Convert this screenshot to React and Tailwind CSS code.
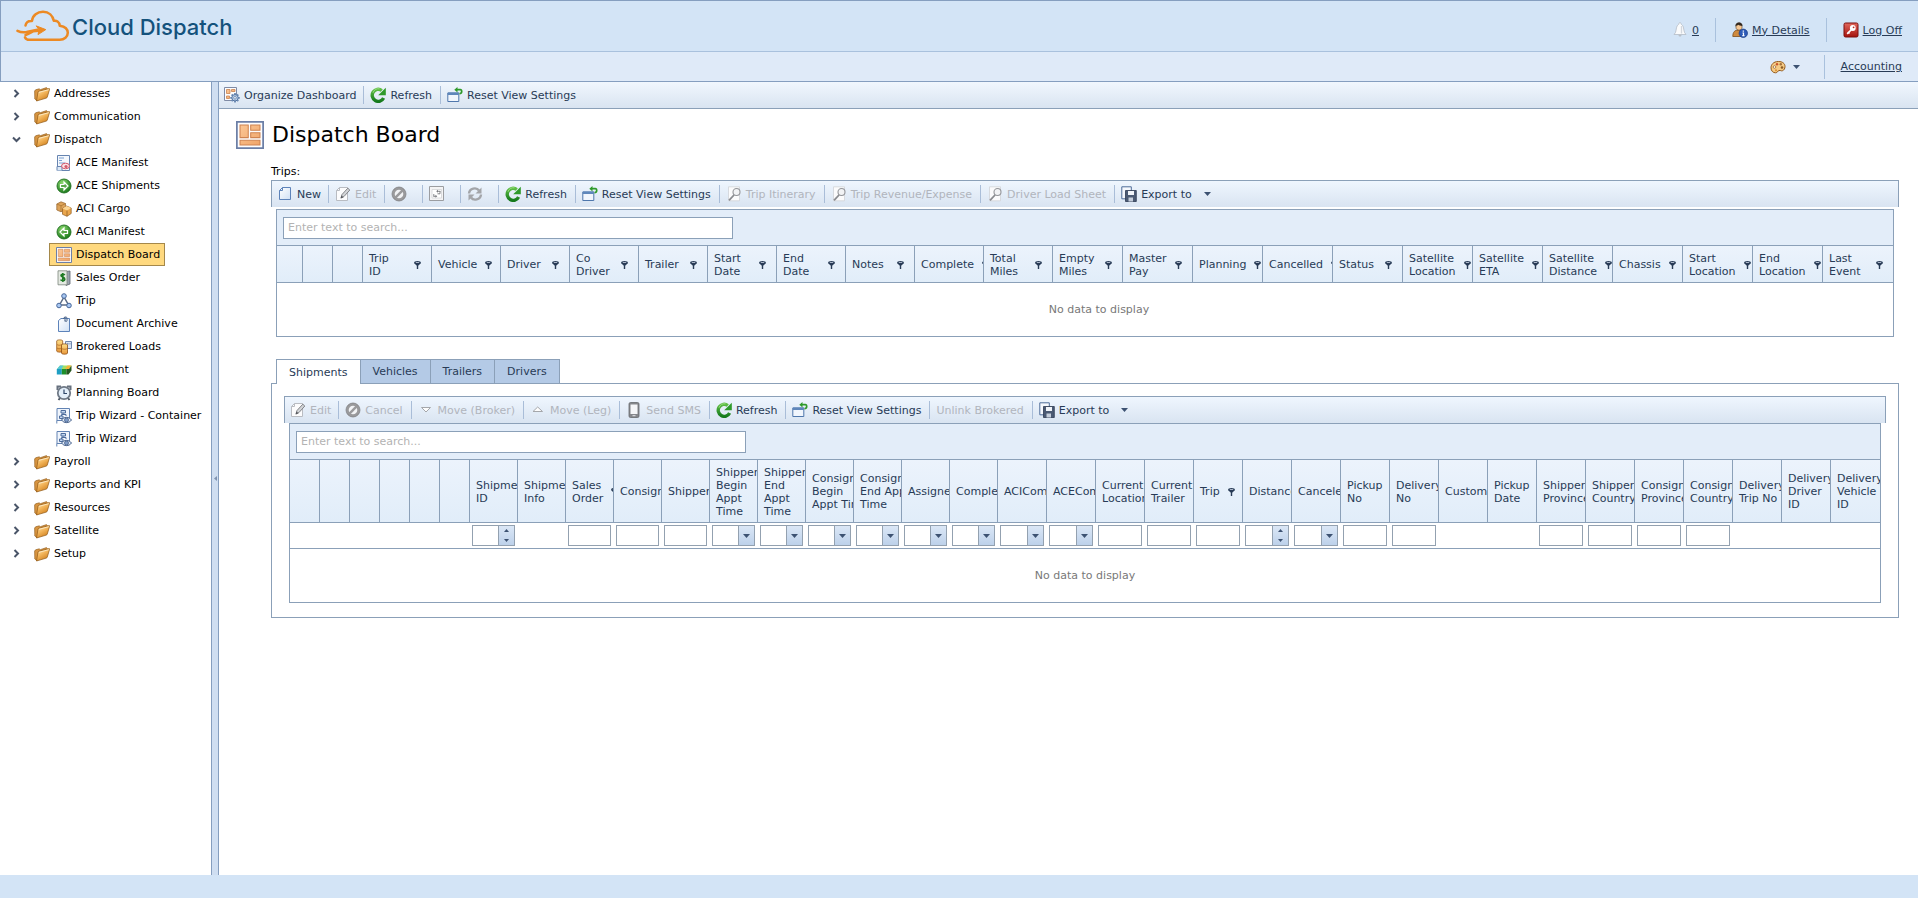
import React, { useState } from "react";

const GREEN = "#2f9a2b";

// Shared gradients for the toolbar and tree icons
const IconDefs = () => (
  <svg width="0" height="0" className="absolute" aria-hidden="true">
    <defs>
      <linearGradient id="folder" x1="0" y1="0" x2="0.6" y2="1">
        <stop offset="0" stopColor="#ffe9b8" />
        <stop offset="0.5" stopColor="#f3b65c" />
        <stop offset="1" stopColor="#d07f1c" />
      </linearGradient>
      <radialGradient id="green" cx="0.4" cy="0.3" r="0.7">
        <stop offset="0" stopColor="#8fdc70" />
        <stop offset="1" stopColor="#1c7a1c" />
      </radialGradient>
      <linearGradient id="paper" x1="0" y1="0" x2="1" y2="1">
        <stop offset="0" stopColor="#ffffff" />
        <stop offset="1" stopColor="#cfe0f5" />
      </linearGradient>
      <linearGradient id="refresh" x1="0" y1="0" x2="0" y2="1">
        <stop offset="0" stopColor="#5fbf45" />
        <stop offset="1" stopColor="#157a1d" />
      </linearGradient>
      <linearGradient id="gold" x1="0" y1="0" x2="0" y2="1">
        <stop offset="0" stopColor="#ffe08a" />
        <stop offset="1" stopColor="#e8973a" />
      </linearGradient>
      <linearGradient id="red" x1="0" y1="0" x2="0" y2="1">
        <stop offset="0" stopColor="#e2685c" />
        <stop offset="1" stopColor="#a3120e" />
      </linearGradient>
      <linearGradient id="tile" x1="0" y1="0" x2="1" y2="1">
        <stop offset="0" stopColor="#fbc795" />
        <stop offset="1" stopColor="#f0a468" />
      </linearGradient>
    </defs>
  </svg>
);

const Svg = ({ children, size = 16 }) => (
  <svg width={size} height={size} viewBox="0 0 16 16" fill="none" className="shrink-0" aria-hidden="true">
    {children}
  </svg>
);

const icons = {
  folder: (
    <>
      <path d="M.6 5 1.600 3.800 5.200 2.800l1 .9L12.500 1.600l1 1.200L3 14.800 .8 13z" fill="#d79440" stroke="#8a5516" strokeWidth="0.600" />
      <path d="M4 6.200c.2-.6.5-.9 1-1L15 2.600c.5-.1.700.1.600.6L13.300 11c-.2.600-.5.900-1 1.100L2.500 15z" fill="url(#folder)" stroke="#8f5714" strokeWidth="0.700" />
      <path d="M5 6.300 14.800 3.700" stroke="#fff6dd" strokeWidth="0.700" />
    </>
  ),
  aceManifest: (
    <>
      <path d="M1.500.5h12v15h-12z" fill="#f4f8fd" stroke="#6684b0" />
      <path d="M3 3h5M3 5.500h3M3 8h6" stroke="#7ba0d0" />
      <path d="M1 15.500v-4h5v4" fill="#dce8f6" stroke="#6684b0" />
      <ellipse cx="9.500" cy="11" rx="4" ry="2.800" fill="#fbe3e6" stroke="#d3596b" />
      <circle cx="10" cy="11.500" r="1.600" fill="#d3596b" />
    </>
  ),
  arrowRight: (
    <>
      <circle cx="8" cy="8" r="7" fill="url(#green)" stroke="#1f6e1f" strokeWidth="0.900" />
      <path d="M4.500 6.500H8V4l4 4-4 4V9.500H4.500z" fill="#5aa84a" stroke="#fff" strokeWidth="1.200" />
    </>
  ),
  arrowLeft: (
    <>
      <circle cx="8" cy="8" r="7" fill="url(#green)" stroke="#1f6e1f" strokeWidth="0.900" />
      <path d="M11.500 6.500H8V4L4 8l4 4V9.500h3.500z" fill="#5aa84a" stroke="#fff" strokeWidth="1.200" />
    </>
  ),
  cargo: (
    <>
      <path d="M.8 3 5 .8l4.500 1.700V8.500L5 10.800.8 9z" fill="#dda35a" stroke="#94622a" strokeWidth="0.700" />
      <path d="M.8 3 5 4.800l4.500-2.300M5 4.800v6" stroke="#a8722e" strokeWidth="0.700" />
      <path d="m6.500 7.500 4-2.500 4.700 2v5.500L11 15.300l-4.500-2z" fill="#eaa64c" stroke="#8e5a20" strokeWidth="0.700" />
      <path d="m6.500 7.500 4.500 2 4.200-2.500L10.500 5z" fill="#fbd695" />
      <path d="M11 9.500v5.800" stroke="#8e5a20" strokeWidth="0.700" />
    </>
  ),
  board: (
    <>
      <path d="M.5.5h15v15H.5z" fill="#fdfdfe" stroke="#6c7fa6" />
      <path d="M2.300 2.300h4.700v7.200H2.300zM8.400 2.300h5.300v3H8.400zM8.400 6.700h5.300v2.800H8.400zM2.300 11h11.400v2.700H2.300z" fill="url(#tile)" stroke="#cf8450" strokeWidth="0.600" />
    </>
  ),
  salesOrder: (
    <>
      <path d="M10 1.500 14 1v13l-4 1.500z" fill="#9aa3ad" stroke="#5e6670" strokeWidth="0.800" />
      <path d="M2 .8h9v14H2z" fill="#e4e9e2" stroke="#7b857c" strokeWidth="0.800" />
      <path d="M8.800 5C8 3.900 5 3.800 5 5.500S8.800 7 8.800 9.200 5.500 11 4.500 9.600M6.800 3v9" stroke="#1f7a24" strokeWidth="1.600" />
    </>
  ),
  trip: (
    <>
      <path d="M8 4 3.500 12h9z" stroke="#5a6b85" strokeWidth="1.500" />
      <circle cx="8" cy="3" r="2.300" fill="#a9c8f2" stroke="#47679a" />
      <circle cx="3" cy="12.500" r="2.300" fill="#a9c8f2" stroke="#47679a" />
      <circle cx="13" cy="12.500" r="2.300" fill="#a9c8f2" stroke="#47679a" />
    </>
  ),
  archive: (
    <>
      <path d="M2.500 4.500 5 2.500h8.500v13h-11z" fill="url(#paper)" stroke="#5d83ba" />
      <path d="M9 1v4.500M7.500 3C7.500.5 11 .5 11 2v2.500c0 1.300-1.800 1.300-1.800 0" stroke="#4d6488" />
    </>
  ),
  brokered: (
    <>
      <path d="M9.500 2.500h6v7h-6z" fill="#dbe5f2" stroke="#7188ac" />
      <path d="M11 4h1.500v1.500H11zM13.500 4h1v1.500h-1z" fill="#7a94bc" />
      <path d="M.7 2c0-1.500 6-1.500 6 0v10c0 1.500-6 1.500-6 0z" fill="url(#gold)" stroke="#99591a" strokeWidth="0.800" />
      <path d="M5.500 6c0-1.500 6-1.500 6 0v8c0 1.600-6 1.600-6 0z" fill="url(#gold)" stroke="#8a4d14" strokeWidth="0.800" />
      <path d="M1 5.500c1 1 3 1 5 0M1 9c1 1 3 1 4.500 0M5.500 9.500c1.500 1 4.500 1 6 0" stroke="#a9651f" strokeWidth="0.700" />
    </>
  ),
  shipment: (
    <>
      <path d="m1 7 3-3.500h11.500L12.500 7z" fill="#a2df64" />
      <path d="m9 7 2.500-3.500h4L13 7z" fill="#f4b43a" />
      <path d="M.8 7h5v5.500h-5z" fill="#1f9fc4" />
      <path d="M5.800 7h4.500v5.500H5.800z" fill="#1f8f2a" />
      <path d="M10.300 7H13l2.500-3.500V8.500L12.500 12.500h-2.200z" fill="#26581f" />
      <path d="m1 7 3-3.500h3.500L5.500 7z" fill="#57c9da" />
    </>
  ),
  clock: (
    <>
      <path d="M1.500 5V1.500H5M14.500 5V1.500H11" stroke="#66707e" strokeWidth="2" />
      <path d="m2.500 15 2-2.500M13.500 15l-2-2.500" stroke="#4d5663" strokeWidth="2" />
      <circle cx="8" cy="8" r="6.200" fill="#e3eef9" stroke="#6f7986" strokeWidth="1.800" />
      <path d="M8 4.500V8.500h3" stroke="#2e4668" strokeWidth="1.200" />
    </>
  ),
  wizard: (
    <>
      <path d="M1 .5h12.500v12H1z" fill="#f0f5fc" stroke="#6283b3" />
      <path d="M5 2.500h4.500V5H5zM3.500 8H7v2.500H3.500z" fill="#c3d7f0" stroke="#4d6c9c" />
      <path d="M7 5v1.500M5.500 8V6.500H10V8" stroke="#4d6c9c" />
      <path d="M.8 15.500V12.500h4" stroke="#6283b3" />
      <path d="M5.500 12c2.500-3.500 7.500-3.500 10 0-2.500 3.500-7.500 3.500-10 0z" fill="#dfe9f6" stroke="#48628c" />
      <circle cx="10.500" cy="12" r="2" fill="#7f9cc8" stroke="#3c5680" strokeWidth="0.700" />
    </>
  ),
  organize: (
    <>
      <path d="M.5.5h12v13H.5z" fill="#fdfdfe" stroke="#7f8ba5" />
      <path d="M2.500 2.500h3.500v4H2.500zM7.500 2.500h3.500v2H7.500zM2.500 9h3v2.500h-3z" fill="url(#tile)" stroke="#c98452" strokeWidth="0.800" />
      <path d="M11 6v9.600M6.200 10.800h9.600M7.600 7.500l6.700 6.700M14.300 7.500l-6.700 6.700" stroke="#6a89b4" strokeWidth="1.800" />
      <circle cx="11" cy="10.800" r="3.200" fill="#b9cfec" stroke="#55759f" />
      <circle cx="11" cy="10.800" r="1.300" fill="#fff" stroke="#55759f" strokeWidth="0.700" />
    </>
  ),
  refresh: (
    <>
      <path d="M13.600 11A6 6 0 1 1 11.800 3.500" stroke="url(#refresh)" strokeWidth="3.400" />
      <path d="M15.800.8V8.200H8.200z" fill={GREEN} />
      <path d="M3 5.800A5.500 5.500 0 0 1 9.500 1.800" stroke="#a5e08c" strokeWidth="0.800" />
    </>
  ),
  reset: (
    <>
      <path d="M.8 6h11v8.500H.8z" fill="#f1f6fd" stroke="#4f77ac" />
      <path d="M.8 5.500h11v2.500H.8z" fill="#5f87bb" />
      <path d="M9 2.700h4.300c2 0 2 4-.8 4" stroke={GREEN} strokeWidth="1.700" />
      <path d="M10.500 0v5.500L7.300 2.800z" fill={GREEN} />
    </>
  ),
  newDoc: (
    <>
      <path d="M2.500 4.500 5.500 1.500h8v12h-11z" fill="url(#paper)" stroke="#5d83ba" />
      <path d="M2.500 4.500h3v-3" stroke="#5d83ba" />
    </>
  ),
  edit: (
    <>
      <path d="M1.500 4.500 4.500 1.500h8v13h-11z" fill="#fcfcfd" stroke="#b9bcc2" />
      <path d="M1.500 4.500h3v-3" stroke="#b9bcc2" />
      <path d="m6 12 1-3.500 5.800-6.300 2 1.800-5.800 6.500z" fill="#d3d5d8" stroke="#77797e" strokeWidth="0.900" />
      <path d="m5.500 12.500 1-3 2 1.800z" fill="#55575c" />
    </>
  ),
  cancel: (
    <>
      <circle cx="8" cy="8" r="5.600" fill="#f2f3f5" stroke="#9a9a9c" strokeWidth="2.600" />
      <path d="m4.200 11.800 7.600-7.600" stroke="#9a9a9c" strokeWidth="2.400" />
      <circle cx="8" cy="8" r="7" stroke="#77777a" strokeWidth="0.700" />
    </>
  ),
  expand: (
    <>
      <path d="M.5.5h14v14H.5z" fill="#f4f4f5" stroke="#9b9da1" />
      <path d="M3 3.500h9.500v8.500H3z" fill="#fff" stroke="#d3d4d7" strokeWidth="0.800" />
      <path d="M8.500 5.300h2.800M11 5v2.800H8.500M4.500 10.300H7M4.800 10.500V8" stroke="#77797e" strokeWidth="0.900" />
      <path d="m9 3.800-1.800 1.500L9 6.800zM6.500 8.800 8.300 10.300 6.500 11.800z" fill="#77797e" />
    </>
  ),
  sync: (
    <>
      <path d="M2 7.500C2.500 2 9.500 1 12 4.500M14 8.500C13.500 14 6.500 15 4 11.500" stroke="#a3a5a9" strokeWidth="2.400" />
      <path d="M14.500 1.500v6h-6zM1.500 14.500v-6h6z" fill="#a3a5a9" />
    </>
  ),
  preview: (
    <>
      <path d="M2.500.8h11v14h-11z" fill="#fbfbfc" stroke="#d0d3d8" strokeWidth="0.800" />
      <circle cx="10.500" cy="6" r="3.500" fill="#f2f3f5" stroke="#94969a" strokeWidth="1.100" />
      <path d="m8 9-5 5.300" stroke="#8a8c90" strokeWidth="1.800" />
    </>
  ),
  exportTo: (
    <>
      <path d="M.8.8h9.500v12H.8z" fill="#f5f8fd" stroke="#4f6d99" />
      <path d="M4.500 4.500h10.800v11H4.500z" fill="#4b5a73" stroke="#2d3a52" strokeWidth="0.800" />
      <path d="M7 5h6v4H7z" fill="#f1f4f9" />
      <path d="M7.500 11.500h4.500v4H7.500z" fill="#c6cedb" />
    </>
  ),
  down: <path d="M3.500 5.500h9L8 10z" fill="#fdfdfd" stroke="#a5a7ab" />,
  up: <path d="M3 9.500h9.500L7.700 5z" fill="#fdfdfd" stroke="#a5a7ab" />,
  phone: (
    <>
      <rect x="3" y="0.500" width="10" height="15" rx="1.500" fill="#85878b" stroke="#66686c" strokeWidth="0.800" />
      <path d="M4.500 2.500h7v9.500h-7z" fill="#f5f6f8" />
      <path d="M6.500 13.700h3" stroke="#e6e7ea" />
    </>
  ),
  bell: (
    <>
      <path d="M8 .8c1 0 1.300.8 1.300 1.500C12 3.500 11.500 8 12.500 10.500l1.500 2H2l1.500-2C4.500 8 4 3.500 6.700 2.300 6.700 1.600 7 .8 8 .8z" fill="#fafbfc" stroke="#b4bbc5" strokeWidth="0.800" />
      <path d="M6.500 13c0 2 3 2 3 0z" fill="#b9bfc7" />
      <path d="M9.500 4v7.500" stroke="#d3d8de" strokeWidth="1.300" />
    </>
  ),
  user: (
    <>
      <path d="M.8 14.500c0-4.500 2-6.500 5.700-6.500s4.500 2 4.500 6.500z" fill="#cf8a3e" stroke="#7b4c1b" strokeWidth="0.800" />
      <path d="M4 3.500C4 0 10 0 10 3.500v2C10 9 4 9 4 5.500z" fill="#f7c894" stroke="#4d3520" strokeWidth="0.600" />
      <path d="M3.500 4.500C2.800-.5 10.800-1 10.300 4 8.500 3.800 7 3.500 6.500 2.800 5.500 3.500 4.500 3.500 3.500 4.500z" fill="#33281f" />
      <circle cx="11.300" cy="11.300" r="4.200" fill="#2e5cb8" stroke="#1a3a80" strokeWidth="0.700" />
      <path d="M11.300 8.500v1.300M10.500 11h1v2.500M10.300 13.700h2.200" stroke="#fff" strokeWidth="1.200" />
    </>
  ),
  key: (
    <>
      <rect x="1" y="1" width="14" height="14" rx="1.500" fill="url(#red)" stroke="#7d0f0c" />
      <circle cx="9.800" cy="6" r="2.900" fill="#fff" />
      <circle cx="10.600" cy="5.300" r="0.900" fill="#b82a22" />
      <path d="m8.500 7.500-4.300 4.300" stroke="#fff" strokeWidth="1.700" />
      <path d="m4.800 9.800 1.700 1.700" stroke="#fff" strokeWidth="1.100" />
    </>
  ),
  palette: (
    <>
      <path d="M8.500 2.500C3 2.500 1 6 1 8.800c0 3 2 5 4.500 5 2.300 0 2-2 3.500-2.300 2-.3 2 .7 3.500.2 1.500-.5 2.500-2.200 2.500-4.200 0-3-2.500-5-6.500-5z" fill="#f5cb85" stroke="#93591b" />
      <circle cx="4.500" cy="8" r="1.300" fill="#fff" stroke="#93591b" strokeWidth="0.700" />
      <circle cx="7" cy="5.300" r="1.200" fill="#c8552d" />
      <circle cx="10.800" cy="5.300" r="1.200" fill="#a4713b" />
      <circle cx="12" cy="8.500" r="1.300" fill="#8d5a24" />
      <circle cx="6" cy="11.300" r="1.100" fill="#d8913c" />
    </>
  ),
};

const Icon = ({ name }) => <Svg>{icons[name]}</Svg>;

const CaretDown = () => (
  <svg width="7" height="4" viewBox="0 0 7 4" className="shrink-0" aria-hidden="true">
    <path d="M0 0h7L3.500 4z" fill="#3d5272" />
  </svg>
);

const FilterIcon = () => (
  <svg width="7" height="8" viewBox="0 0 7 8" className="shrink-0" aria-hidden="true">
    <ellipse cx="3.500" cy="1.700" rx="3.400" ry="1.700" fill="#283b56" />
    <path d="M.6 2.600h5.800L4.200 4.800v3.200H2.800V4.800z" fill="#283b56" />
    <path d="M1.800 1.500h3.400" stroke="#dfe9f6" strokeWidth="0.700" />
  </svg>
);

const Logo = () => (
  <svg width="54" height="32" viewBox="0 0 54 32" fill="none" stroke="#ec8a24" strokeWidth="2.500" strokeLinecap="round" strokeLinejoin="round" aria-hidden="true">
    <path d="M9.500 15.500c.5-3 3-4.800 6.500-4.500C16.500 5 21.500 1.800 27 1.800c6 0 9.800 4 10.800 9 2.500-.5 5.500.5 6 5 4.500.8 8 3 8 7 0 4-3.500 7-8 7H13c-2 0-3.200-1-4-2.500" />
    <path d="M1.500 20.800c3 1.500 6 1.700 9 1.200l11-2.200" />
    <path d="M9.500 25c2.500-1 5-2.300 7.500-3.700l6-.5" />
    <path d="m20.500 16 9.300 3.600-7.800 5 1-4.600z" fill="#ec8a24" strokeWidth="1" />
  </svg>
);

const tree = [
  { label: "Addresses" },
  { label: "Communication" },
  {
    label: "Dispatch",
    children: [
      { label: "ACE Manifest", icon: "aceManifest" },
      { label: "ACE Shipments", icon: "arrowRight" },
      { label: "ACI Cargo", icon: "cargo" },
      { label: "ACI Manifest", icon: "arrowLeft" },
      { label: "Dispatch Board", icon: "board" },
      { label: "Sales Order", icon: "salesOrder" },
      { label: "Trip", icon: "trip" },
      { label: "Document Archive", icon: "archive" },
      { label: "Brokered Loads", icon: "brokered" },
      { label: "Shipment", icon: "shipment" },
      { label: "Planning Board", icon: "clock" },
      { label: "Trip Wizard - Container", icon: "wizard" },
      { label: "Trip Wizard", icon: "wizard" },
    ],
  },
  { label: "Payroll" },
  { label: "Reports and KPI" },
  { label: "Resources" },
  { label: "Satellite" },
  { label: "Setup" },
];

const tripActions = [
  { label: "New", icon: "newDoc" },
  { label: "Edit", icon: "edit", disabled: true },
  { title: "Cancel", icon: "cancel", disabled: true },
  { title: "Expand", icon: "expand", disabled: true },
  { title: "Sync", icon: "sync", disabled: true },
  { label: "Refresh", icon: "refresh" },
  { label: "Reset View Settings", icon: "reset" },
  { label: "Trip Itinerary", icon: "preview", disabled: true },
  { label: "Trip Revenue/Expense", icon: "preview", disabled: true },
  { label: "Driver Load Sheet", icon: "preview", disabled: true },
  { label: "Export to", icon: "exportTo", menu: true },
];

const shipmentActions = [
  { label: "Edit", icon: "edit", disabled: true },
  { label: "Cancel", icon: "cancel", disabled: true },
  { label: "Move (Broker)", icon: "down", disabled: true },
  { label: "Move (Leg)", icon: "up", disabled: true },
  { label: "Send SMS", icon: "phone", disabled: true },
  { label: "Refresh", icon: "refresh" },
  { label: "Reset View Settings", icon: "reset" },
  { label: "Unlink Brokered", disabled: true },
  { label: "Export to", icon: "exportTo", menu: true },
];

const tripColumns = [
  "Trip\nID", "Vehicle", "Driver", "Co\nDriver", "Trailer", "Start\nDate", "End\nDate", "Notes", "Complete",
  "Total\nMiles", "Empty\nMiles", "Master\nPay", "Planning", "Cancelled", "Status", "Satellite\nLocation",
  "Satellite\nETA", "Satellite\nDistance", "Chassis", "Start\nLocation", "End\nLocation", "Last\nEvent",
];

const shipmentColumns = [
  { label: "Shipment\nID", filter: "spin" },
  { label: "Shipment\nInfo" },
  { label: "Sales\nOrder", filter: "text" },
  { label: "Consignee", filter: "text" },
  { label: "Shipper", filter: "text" },
  { label: "Shipper\nBegin\nAppt\nTime", filter: "combo" },
  { label: "Shipper\nEnd\nAppt\nTime", filter: "combo" },
  { label: "Consignee\nBegin\nAppt Time", filter: "combo" },
  { label: "Consignee\nEnd Appt\nTime", filter: "combo" },
  { label: "Assigned", filter: "combo" },
  { label: "Completed", filter: "combo" },
  { label: "ACIComplete", filter: "combo" },
  { label: "ACEComplete", filter: "combo" },
  { label: "Current\nLocation", filter: "text" },
  { label: "Current\nTrailer", filter: "text" },
  { label: "Trip", filter: "text" },
  { label: "Distance", filter: "spin" },
  { label: "Canceled", filter: "combo" },
  { label: "Pickup\nNo", filter: "text" },
  { label: "Delivery\nNo", filter: "text" },
  { label: "Customs" },
  { label: "Pickup\nDate" },
  { label: "Shipper\nProvince", filter: "text" },
  { label: "Shipper\nCountry", filter: "text" },
  { label: "Consignee\nProvince", filter: "text" },
  { label: "Consignee\nCountry", filter: "text" },
  { label: "Delivery\nTrip No" },
  { label: "Delivery\nDriver\nID" },
  { label: "Delivery\nVehicle\nID" },
];

const tabs = ["Shipments", "Vehicles", "Trailers", "Drivers"];

const ToolbarButton = ({ item }) => (
  <button
    type="button"
    disabled={item.disabled}
    title={item.title}
    className="flex h-[18px] items-center gap-1 whitespace-nowrap border-r border-[#a9bdd8] pl-[6px] pr-2 first:pl-[5px] first:pr-[7px] last:border-r-0 disabled:text-[#b1b5bd]"
  >
    {item.icon && <Icon name={item.icon} />}
    {item.label ? <span>{item.label}</span> : <span className="w-[3px]" />}
    {item.menu && (
      <span className="ml-2">
        <CaretDown />
      </span>
    )}
  </button>
);

const Toolbar = ({ items }) => (
  <div role="toolbar" className="flex h-[27px] items-center border-x border-t border-[#8ba0b8] bg-linear-to-b from-[#eff6fe] to-[#d9e4f1]">
    {items.map((item) => (
      <ToolbarButton key={item.label || item.title} item={item} />
    ))}
  </div>
);

const SearchPanel = () => (
  <div className="flex h-9 items-center border-b border-[#8ba0b8] bg-[#e3edf9] px-[6px]">
    <input
      type="text"
      aria-label="Search"
      placeholder="Enter text to search..."
      className="h-[22px] w-[450px] border border-[#8ba0b8] bg-white px-1 outline-none placeholder:text-[#b3b3b3]"
    />
  </div>
);

const HeaderCell = ({ label }) => (
  <th className="overflow-hidden border-b border-r border-[#8ba0b8] bg-linear-to-b from-[#ecf3fc] to-[#e1edf9] p-0 text-left font-normal last:border-r-0">
    {label && (
      <div className="flex items-center gap-2 overflow-hidden pl-[6px] pr-[10px] pt-px">
        <span className="flex-1 shrink-0 whitespace-pre leading-[13px]">{label}</span>
        <FilterIcon />
      </div>
    )}
  </th>
);

const FilterEditor = ({ type, label }) => {
  const name = label.replace(/\n/g, " ");

  if (type === "text") {
    return <input type="text" aria-label={name} className="block h-[21px] w-full border border-[#93a1b0] bg-white px-1 outline-none" />;
  }

  if (type === "combo") {
    return (
      <div className="grid h-[21px] border border-[#93a1b0] bg-white">
        <select aria-label={name} className="col-start-1 row-start-1 w-full appearance-none bg-transparent outline-none">
          <option></option>
        </select>
        <span className="pointer-events-none col-start-1 row-start-1 flex w-4 items-center justify-center justify-self-end border-l border-[#93a1b0] bg-linear-to-b from-[#dbe7f6] to-[#bdd1ea]">
          <CaretDown />
        </span>
      </div>
    );
  }

  return (
    <div className="flex h-[21px] border border-[#93a1b0] bg-white">
      <input type="text" inputMode="numeric" aria-label={name} className="w-full min-w-0 px-1 outline-none" />
      <div className="flex w-4 shrink-0 flex-col border-l border-[#93a1b0] bg-linear-to-b from-[#dbe7f6] to-[#bdd1ea]">
        <button type="button" aria-label={"Increase " + name} className="flex flex-1 items-center justify-center">
          <svg width="5" height="3" viewBox="0 0 5 3"><path d="M0 3h5L2.500 0z" fill="#3d5272" /></svg>
        </button>
        <button type="button" aria-label={"Decrease " + name} className="flex flex-1 items-center justify-center">
          <svg width="5" height="3" viewBox="0 0 5 3"><path d="M0 0h5L2.500 3z" fill="#3d5272" /></svg>
        </button>
      </div>
    </div>
  );
};

const TripsGrid = () => (
  <div className="mx-[5px] mt-[2px] border border-[#8ba0b8] bg-white">
    <SearchPanel />
    <table className="w-full table-fixed border-separate border-spacing-0">
      <colgroup>
        <col className="w-[26px]" />
        <col className="w-[30px]" />
        <col className="w-[30px]" />
        {tripColumns.map((label, i) => (
          <col key={label} className={i < 10 ? "w-[69px]" : ""} />
        ))}
      </colgroup>
      <thead>
        <tr className="h-[37px]">
          <HeaderCell />
          <HeaderCell />
          <HeaderCell />
          {tripColumns.map((label) => (
            <HeaderCell key={label} label={label} />
          ))}
        </tr>
      </thead>
      <tbody>
        <tr className="h-[53px]">
          <td colSpan={tripColumns.length + 3} className="pl-7 text-center text-[#787878]">
            No data to display
          </td>
        </tr>
      </tbody>
    </table>
  </div>
);

const ShipmentsGrid = () => (
  <div className="mx-[5px] border border-[#8ba0b8] bg-white">
    <SearchPanel />
    <table className="w-full table-fixed border-separate border-spacing-0">
      <colgroup>
        {[1, 2, 3, 4, 5, 6].map((n) => (
          <col key={n} className="w-[30px]" />
        ))}
        {shipmentColumns.map((col, i) => (
          <col key={col.label} className={i < 11 ? "w-12" : ""} />
        ))}
      </colgroup>
      <thead>
        <tr className="h-[63px]">
          {[1, 2, 3, 4, 5, 6].map((n) => (
            <HeaderCell key={n} />
          ))}
          {shipmentColumns.map((col) => (
            <HeaderCell key={col.label} label={col.label} />
          ))}
        </tr>
      </thead>
      <tbody>
        <tr className="h-[26px]">
          <td colSpan={6} className="border-b border-[#8ba0b8] p-0"></td>
          {shipmentColumns.map((col) => (
            <td key={col.label} className="border-b border-[#8ba0b8] py-0 pl-[2px] pr-[3px]">
              {col.filter && <FilterEditor type={col.filter} label={col.label} />}
            </td>
          ))}
        </tr>
        <tr className="h-[53px]">
          <td colSpan={shipmentColumns.length + 6} className="p-0 text-center text-[#787878]">
            No data to display
          </td>
        </tr>
      </tbody>
    </table>
  </div>
);

const Header = () => (
  <header className="border-b border-l border-t border-[#859ebf] text-[#283b56]">
    <div className="flex h-[51px] items-center justify-between border-b border-[#a9c1dd] bg-[#d3e4f6] pr-4">
      <div className="flex items-center pl-[15px]">
        <Logo />
        <span className="ml-[2px] pt-[2px] font-['Inter'] text-[22px] font-medium leading-8 text-[#14527c]">Cloud Dispatch</span>
      </div>
      <div className="mt-2 flex h-6 items-center">
        <a href="#" className="flex items-center gap-1 pr-4 underline">
          <Icon name="bell" />0
        </a>
        <a href="#" className="flex h-6 items-center gap-1 border-l border-[#a9c1dd] px-4 underline">
          <Icon name="user" />My Details
        </a>
        <a href="#" className="flex h-6 items-center gap-1 border-l border-[#a9c1dd] pl-4 underline">
          <Icon name="key" />Log Off
        </a>
      </div>
    </div>
    <div className="flex h-[29px] items-center justify-end bg-[#dfeaf8] pr-4">
      <button type="button" aria-label="Theme" className="flex h-6 items-center gap-[7px] pr-6">
        <Icon name="palette" />
        <CaretDown />
      </button>
      <a href="#" className="flex h-6 items-center border-l border-[#a9c1dd] pl-4 underline">Accounting</a>
    </div>
  </header>
);

const Sidebar = () => {
  const [open, setOpen] = useState("Dispatch");

  return (
    <nav className="w-[211px] shrink-0 bg-white text-black">
      <ul>
        {tree.map((node) => (
          <li key={node.label}>
            <button
              type="button"
              onClick={() => setOpen(open === node.label ? "" : node.label)}
              className="flex h-[23px] items-center pl-3"
            >
              <svg width="9" height="9" viewBox="0 0 9 9" fill="none" stroke="#4a5568" strokeWidth="2" aria-hidden="true">
                <path d={open === node.label ? "M1 2.500 4.500 6 8 2.500" : "M2.500 1 6 4.500 2.500 8"} />
              </svg>
              <span className="ml-[13px] mr-1">
                <Icon name="folder" />
              </span>
              {node.label}
            </button>
            {open === node.label && node.children && (
              <ul>
                {node.children.map((child) => (
                  <li key={child.label} className="flex pl-[49px]">
                    <a
                      href="#"
                      className={
                        child.label === "Dispatch Board"
                          ? "flex h-[23px] items-center gap-1 whitespace-nowrap border border-[#a5884a] bg-[#ffd97f] pl-[6px] pr-1"
                          : "flex h-[23px] items-center gap-1 whitespace-nowrap border border-transparent pl-[6px] pr-1"
                      }
                    >
                      <Icon name={child.icon} />
                      {child.label}
                    </a>
                  </li>
                ))}
              </ul>
            )}
          </li>
        ))}
      </ul>
    </nav>
  );
};

const App = () => {
  const [activeTab, setActiveTab] = useState("Shipments");

  return (
    <div className="flex min-h-screen flex-col bg-white font-['DejaVu_Sans',sans-serif] text-[11px] leading-[13px] text-[#283b56]">
      <IconDefs />
      <Header />

      <div className="flex flex-1">
        <Sidebar />

        {/* splitter */}
        <div className="flex w-2 shrink-0 items-center justify-center border-x border-[#859ebf] bg-[#cfdef1]">
          <svg width="3" height="5" viewBox="0 0 3 5" aria-hidden="true"><path d="M3 0v5L0 2.500z" fill="#7f93b0" /></svg>
        </div>

        <main className="min-w-0 flex-1">
          <div role="toolbar" className="flex h-[27px] items-center border-b border-[#8ba0b8] bg-linear-to-b from-[#f1f7fe] to-[#d9e4f1]">
            <ToolbarButton item={{ label: "Organize Dashboard", icon: "organize" }} />
            <ToolbarButton item={{ label: "Refresh", icon: "refresh" }} />
            <ToolbarButton item={{ label: "Reset View Settings", icon: "reset" }} />
          </div>

          <div className="flex items-center gap-2 pl-[17px] pt-3">
            <Svg size={28}>{icons.board}</Svg>
            <h1 className="text-[22px] leading-7 text-black">Dispatch Board</h1>
          </div>

          <div className="ml-[52px] mr-[19px] mt-4">
            <p className="mb-[2px] text-black">Trips:</p>
            <Toolbar items={tripActions} />
            <TripsGrid />

            <div role="tablist" className="relative -mb-px ml-[5px] mt-[22px] flex h-[25px]">
              {tabs.map((tab) => (
                <button
                  key={tab}
                  type="button"
                  role="tab"
                  aria-selected={activeTab === tab}
                  onClick={() => setActiveTab(tab)}
                  className={
                    activeTab === tab
                      ? "border-l border-t border-[#8ba0b8] bg-white px-3 last:border-r"
                      : "border-b border-l border-t border-[#8ba0b8] bg-[#b4cae6] px-3 last:border-r"
                  }
                >
                  {tab}
                </button>
              ))}
            </div>
            <section className="border border-[#8ba0b8] px-3 pb-[14px] pt-3">
              <Toolbar items={shipmentActions} />
              <ShipmentsGrid />
            </section>
          </div>
        </main>
      </div>

      <footer className="h-[23px] bg-[#d3e4f6]"></footer>
    </div>
  );
};

export default App;
